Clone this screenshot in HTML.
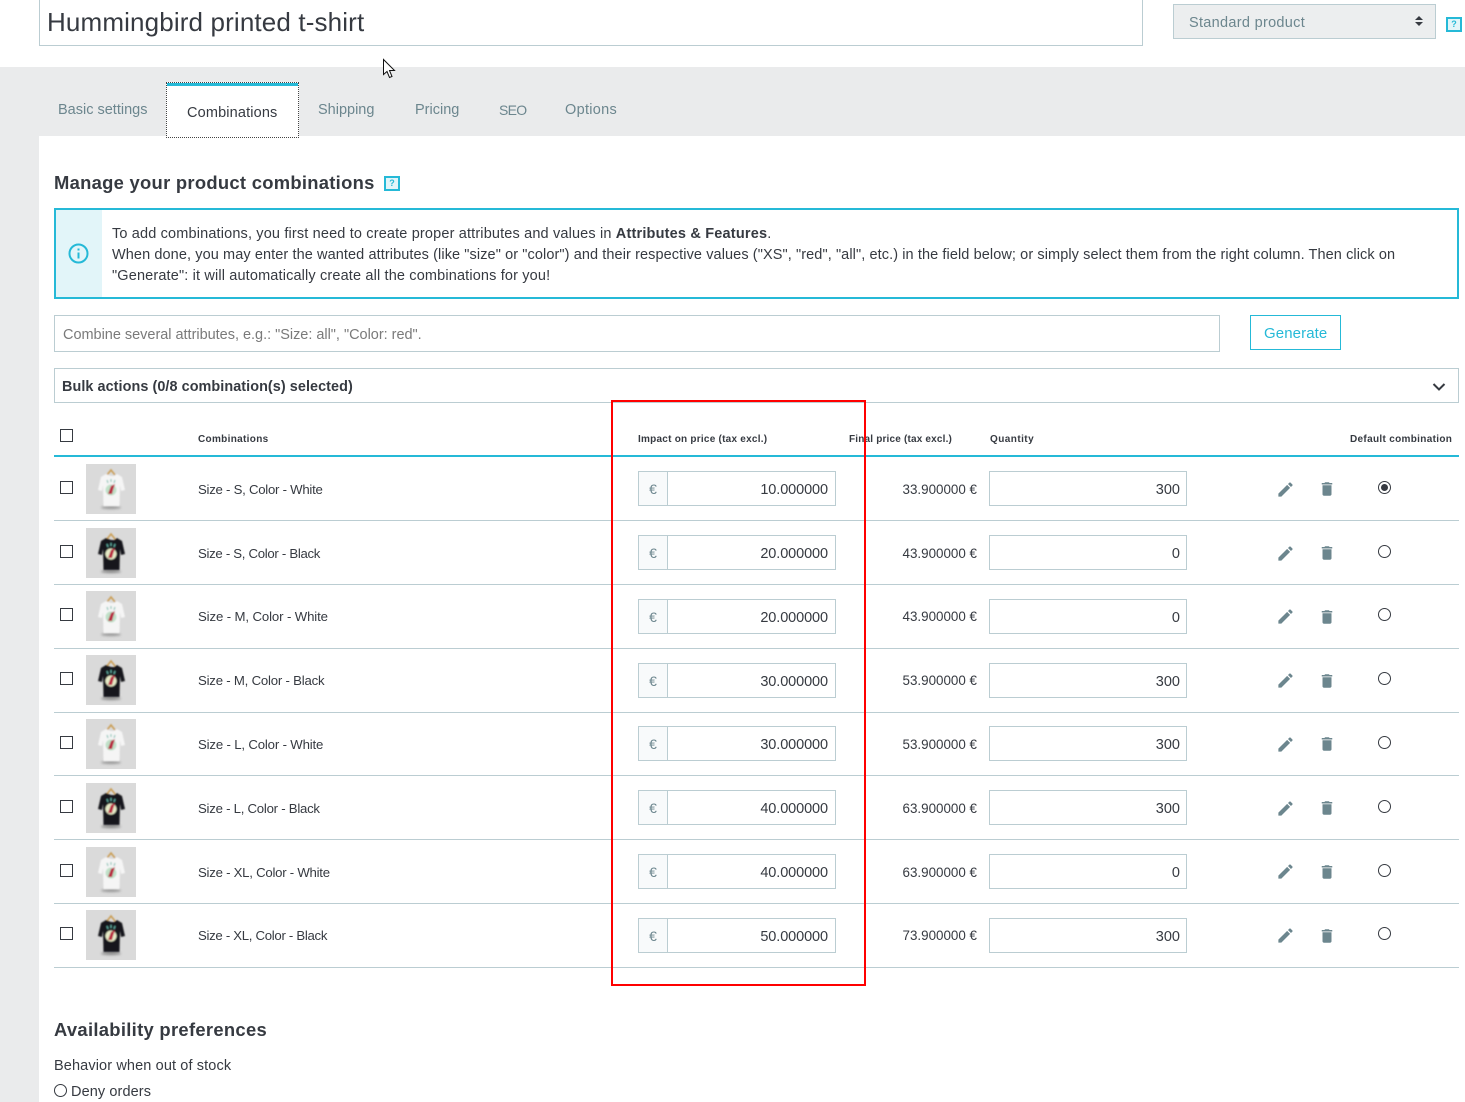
<!DOCTYPE html>
<html><head><meta charset="utf-8"><title>Product</title>
<style>
html,body{margin:0;padding:0;background:#fff}
#p{position:relative;width:1465px;height:1102px;overflow:hidden;background:#fff;font-family:"Liberation Sans",sans-serif;color:#363a41;font-size:14px}
#p div,#p span.a,#p svg.a{position:absolute;box-sizing:border-box}
.t{white-space:nowrap;line-height:20px}
.row{left:0;width:1465px;height:64px}
.sep{left:54px;width:1405px;top:63.45px;height:1px;background:#bbcdd2}
.cb{left:60px;top:23.9px;width:13px;height:13px;border:1px solid #363a41;background:#fff}
.th{left:86px;top:6.9px;width:50px;height:50px;background:#d9d9d9}
.nm{left:198px;top:22.9px;font-size:13.2px;letter-spacing:-.21px}
.pre{left:638px;top:14.4px;width:30px;height:35px;background:#f8fafb;border:1px solid #bbcdd2;color:#6c868e;text-align:center;line-height:35px;font-size:14px}
.inp{left:667px;top:14.4px;width:169px;height:35px;border:1px solid #bbcdd2;text-align:right;padding-right:7px;padding-top:2px;line-height:33px;font-size:14.5px;letter-spacing:-.1px;background:#fff}
.fin{left:820px;width:157px;top:22.9px;text-align:right;font-size:13.4px}
.qty{left:989px;top:14.4px;width:198px;height:35px;border:1px solid #bbcdd2;text-align:right;padding-right:6px;padding-top:2px;line-height:33px;font-size:14.5px;background:#fff}
.pen{left:1276px;top:22.8px;width:19px;height:19px}
.tr{left:1318px;top:23.3px;width:18px;height:18px}
.rd{left:1378px;top:24px;width:13px;height:13px;border:1px solid #363a41;border-radius:50%;background:#fff}
.hd{font-weight:bold;font-size:10px;top:430px;letter-spacing:.32px}
.tab{top:100px;color:#6c868e;font-size:14.5px}
.hp{width:16px;height:15px;border:2px solid #25b9d7;background:#e2f5f9;color:#25b9d7;font-weight:bold;font-size:9px;line-height:11px;text-align:center}
</style></head><body>
<svg width="0" height="0" style="position:absolute"><defs>
<symbol id="pn" viewBox="0 0 24 24"><path fill="#6c868e" d="M3 17.25V21h3.75L17.81 9.94l-3.75-3.75L3 17.25zM20.71 7.04a1 1 0 0 0 0-1.41l-2.34-2.34a1 1 0 0 0-1.41 0l-1.83 1.83 3.75 3.75 1.83-1.83z"/></symbol>
<symbol id="tc" viewBox="0 0 24 24"><path fill="#6c868e" d="M6 19c0 1.1.9 2 2 2h8c1.1 0 2-.9 2-2V7H6v12zM19 4h-3.5l-1-1h-5l-1 1H5v2h14V4z"/></symbol>
<filter id="bl" x="-20%" y="-20%" width="140%" height="140%"><feGaussianBlur stdDeviation=".7"/></filter>
<filter id="bs" x="-30%" y="-100%" width="160%" height="300%"><feGaussianBlur stdDeviation="1.3"/></filter>
<symbol id="ws" viewBox="0 0 50 50"><rect width="50" height="50" fill="#dadada"/><ellipse cx="25" cy="43.500" rx="10" ry="1.500" fill="#959595" filter="url(#bs)"/><g filter="url(#bl)"><path d="M21 11l4-5 4 5" fill="none" stroke="#c99a4d" stroke-width="1.500"/><path d="M20 10l-5 3-3 13 4 1 1-6 .500 21h16l.500-21 1 6 4-1-3-13-5-3-3 2h-3z" fill="#f5f5f5"/><path d="M21 16l1 3M25 15v3M29 16l-1 3" stroke="#8cc6ba" stroke-width="1.200"/><circle cx="25" cy="26" r="5.500" fill="#bfe0c8"/><path d="M22 30l3-8 4-2-2 6-1 4z" fill="#b8233c"/></g></symbol>
<symbol id="bs1" viewBox="0 0 50 50"><rect width="50" height="50" fill="#dadada"/><ellipse cx="25" cy="43.500" rx="10" ry="1.500" fill="#858585" filter="url(#bs)"/><g filter="url(#bl)"><path d="M21 11l4-5 4 5" fill="none" stroke="#c99a4d" stroke-width="1.500"/><path d="M20 10l-5 3-3 13 4 1 1-6 .500 21h16l.500-21 1 6 4-1-3-13-5-3-3 2h-3z" fill="#16181d"/><path d="M21 16l1 3M25 15v3M29 16l-1 3" stroke="#63b7a9" stroke-width="1.200"/><circle cx="25" cy="26" r="5.500" fill="#e6ecc8"/><path d="M22 30l3-8 4-2-2 6-1 4z" fill="#b8233c"/></g></symbol>
</defs></svg>
<div id="p">
<div style="left:0;top:67px;width:1465px;height:1035px;background:#eaebec"></div>
<div style="left:39px;top:136px;width:1426px;height:966px;background:#fff"></div>

<div style="left:39px;top:-2px;width:1104px;height:48px;border:1px solid #bbcdd2;background:#fff"></div>
<div class="t" style="left:47px;top:10px;font-size:26px;line-height:24px;letter-spacing:.14px">Hummingbird printed t-shirt</div>
<div style="left:1173px;top:4px;width:263px;height:35px;background:#eceeef;border:1px solid #bbcdd2"></div>
<div class="t" style="left:1189px;top:13px;color:#6c868e;font-size:14.5px;letter-spacing:.3px">Standard product</div>
<svg class="a" style="left:1414px;top:15px" width="10" height="12" viewBox="0 0 10 12"><path d="M1 5l4-4 4 4zM1 7l4 4 4-4z" fill="#363a41"/></svg>
<div class="hp" style="left:1446px;top:17px">?</div>

<div class="t tab" style="left:58px">Basic settings</div>
<div style="left:166px;top:82px;width:133px;height:56px;background:#fff;border:1px dotted #444"></div>
<div style="left:167px;top:83px;width:131px;height:3px;background:#25b9d7"></div>
<div class="t" style="left:187px;top:103px;font-size:14.5px;letter-spacing:.15px">Combinations</div>
<div class="t tab" style="left:318px">Shipping</div>
<div class="t tab" style="left:415px">Pricing</div>
<div class="t tab" style="left:499px;font-size:14px;letter-spacing:-.7px">SEO</div>
<div class="t tab" style="left:565px;letter-spacing:.3px">Options</div>
<svg class="a" style="left:382px;top:58px" width="16" height="22" viewBox="0 0 16 22"><path d="M1.500 1.500V16.500L5 13.500 7.500 19.500 10 18.500 7.500 12.500H12.500z" fill="#fff" stroke="#111" stroke-width="1"/></svg>

<div class="t" style="left:54px;top:173px;font-size:18.4px;font-weight:bold;letter-spacing:.28px">Manage your product combinations</div>
<div class="hp" style="left:384px;top:176px">?</div>

<div style="left:54px;top:208px;width:1405px;height:91px;border:2px solid #25b9d7;background:#fff"></div>
<div style="left:56px;top:210px;width:46px;height:87px;background:#e2f5f9"></div>
<svg class="a" style="left:68px;top:243px" width="21" height="21" viewBox="0 0 21 21"><circle cx="10.500" cy="10.500" r="9" fill="none" stroke="#25b9d7" stroke-width="2"/><path d="M10.500 5.500v2M10.500 9.500v6" stroke="#25b9d7" stroke-width="2"/></svg>
<div class="t" style="left:112px;top:224px;font-size:14.5px;letter-spacing:.155px">To add combinations, you first need to create proper attributes and values in <b style="letter-spacing:.19px">Attributes &amp; Features</b>.</div>
<div class="t" style="left:112px;top:245px;font-size:14.5px;letter-spacing:.093px">When done, you may enter the wanted attributes (like "size" or "color") and their respective values ("XS", "red", "all", etc.) in the field below; or simply select them from the right column. Then click on</div>
<div class="t" style="left:112px;top:266px;font-size:14.5px;letter-spacing:.15px">"Generate": it will automatically create all the combinations for you!</div>

<div style="left:54px;top:315px;width:1166px;height:37px;border:1px solid #bbcdd2"></div>
<div class="t" style="left:63px;top:325px;color:#7a7a7a;font-size:14.5px;letter-spacing:-.02px">Combine several attributes, e.g.: "Size: all", "Color: red".</div>
<div style="left:1250px;top:315px;width:91px;height:35px;border:1px solid #25b9d7"></div>
<div class="t" style="left:1264px;top:324px;color:#25b9d7;font-size:15px;letter-spacing:.1px">Generate</div>

<div style="left:54px;top:368px;width:1405px;height:35px;border:1px solid #bbcdd2"></div>
<div class="t" style="left:62px;top:377px;font-weight:bold;font-size:14.4px;letter-spacing:.07px">Bulk actions (0/8 combination(s) selected)</div>
<svg class="a" style="left:1432px;top:382px" width="14" height="10" viewBox="0 0 14 10"><path d="M1.500 2L7 7.500 12.500 2" fill="none" stroke="#363a41" stroke-width="2"/></svg>

<div class="cb" style="left:60px;top:429px"></div>
<div class="t hd" style="left:198px">Combinations</div>
<div class="t hd" style="left:638px;letter-spacing:.24px">Impact on price (tax excl.)</div>
<div class="t hd" style="left:849px;letter-spacing:.18px">Final price (tax excl.)</div>
<div class="t hd" style="left:990px;letter-spacing:.44px">Quantity</div>
<div class="t hd" style="left:1350px">Default combination</div>
<div style="left:54px;top:455px;width:1405px;height:2px;background:#25b9d7"></div>

<div class="row" style="top:457px"><div class="sep"></div><div class="cb"></div><svg class="a th"><use href="#ws"/></svg><div class="t nm" style="letter-spacing:-.255px">Size - S, Color - White</div><div class="pre">€</div><div class="inp">10.000000</div><div class="t fin">33.900000 €</div><div class="qty">300</div><svg class="a pen"><use href="#pn"/></svg><svg class="a tr"><use href="#tc"/></svg><div class="rd"><div style="left:2px;top:2px;width:7px;height:7px;border-radius:50%;background:#363a41"></div></div></div>
<div class="row" style="top:520.75px"><div class="sep"></div><div class="cb"></div><svg class="a th"><use href="#bs1"/></svg><div class="t nm" style="letter-spacing:-.3px">Size - S, Color - Black</div><div class="pre">€</div><div class="inp">20.000000</div><div class="t fin">43.900000 €</div><div class="qty">0</div><svg class="a pen"><use href="#pn"/></svg><svg class="a tr"><use href="#tc"/></svg><div class="rd"></div></div>
<div class="row" style="top:584.5px"><div class="sep"></div><div class="cb"></div><svg class="a th"><use href="#ws"/></svg><div class="t nm" style="letter-spacing:-.12px">Size - M, Color - White</div><div class="pre">€</div><div class="inp">20.000000</div><div class="t fin">43.900000 €</div><div class="qty">0</div><svg class="a pen"><use href="#pn"/></svg><svg class="a tr"><use href="#tc"/></svg><div class="rd" style="top:23.9px"></div></div>
<div class="row" style="top:648.25px"><div class="sep"></div><div class="cb"></div><svg class="a th"><use href="#bs1"/></svg><div class="t nm">Size - M, Color - Black</div><div class="pre">€</div><div class="inp">30.000000</div><div class="t fin">53.900000 €</div><div class="qty">300</div><svg class="a pen"><use href="#pn"/></svg><svg class="a tr"><use href="#tc"/></svg><div class="rd"></div></div>
<div class="row" style="top:712px"><div class="sep"></div><div class="cb"></div><svg class="a th"><use href="#ws"/></svg><div class="t nm" style="letter-spacing:-.165px">Size - L, Color - White</div><div class="pre">€</div><div class="inp">30.000000</div><div class="t fin">53.900000 €</div><div class="qty">300</div><svg class="a pen"><use href="#pn"/></svg><svg class="a tr"><use href="#tc"/></svg><div class="rd"></div></div>
<div class="row" style="top:775.75px"><div class="sep"></div><div class="cb"></div><svg class="a th"><use href="#bs1"/></svg><div class="t nm" style="letter-spacing:-.25px">Size - L, Color - Black</div><div class="pre">€</div><div class="inp">40.000000</div><div class="t fin">63.900000 €</div><div class="qty">300</div><svg class="a pen"><use href="#pn"/></svg><svg class="a tr"><use href="#tc"/></svg><div class="rd"></div></div>
<div class="row" style="top:839.7px"><div class="sep"></div><div class="cb"></div><svg class="a th"><use href="#ws"/></svg><div class="t nm" style="letter-spacing:-.25px">Size - XL, Color - White</div><div class="pre">€</div><div class="inp">40.000000</div><div class="t fin">63.900000 €</div><div class="qty">0</div><svg class="a pen"><use href="#pn"/></svg><svg class="a tr"><use href="#tc"/></svg><div class="rd"></div></div>
<div class="row" style="top:903.25px"><div class="sep"></div><div class="cb"></div><svg class="a th"><use href="#bs1"/></svg><div class="t nm" style="letter-spacing:-.3px">Size - XL, Color - Black</div><div class="pre">€</div><div class="inp">50.000000</div><div class="t fin">73.900000 €</div><div class="qty">300</div><svg class="a pen"><use href="#pn"/></svg><svg class="a tr"><use href="#tc"/></svg><div class="rd"></div></div>

<div style="left:611px;top:400px;width:255px;height:586px;border:2px solid #f00"></div>

<div class="t" style="left:54px;top:1020px;font-size:18.4px;font-weight:bold;letter-spacing:.3px">Availability preferences</div>
<div class="t" style="left:54px;top:1056px;font-size:14.5px;letter-spacing:.12px">Behavior when out of stock</div>
<div class="rd" style="left:54px;top:1084px"></div>
<div class="t" style="left:71px;top:1082px;font-size:14.5px;letter-spacing:.1px">Deny orders</div>
</div>
</body></html>
